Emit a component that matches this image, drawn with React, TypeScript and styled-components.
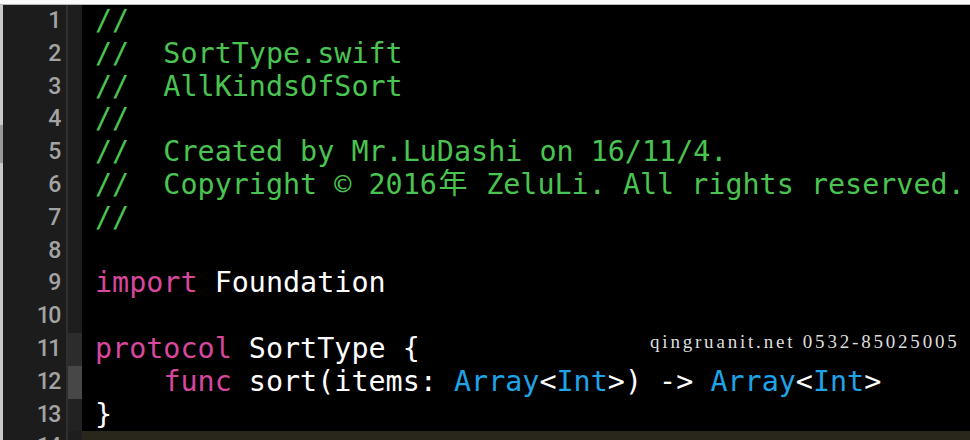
import React from "react";
import styled, { createGlobalStyle } from "styled-components";

const Global = createGlobalStyle`
  html, body { margin: 0; padding: 0; background: #000; overflow: hidden; }
  #root { width: 970px; height: 440px; }
`;

type Kind = "comment" | "keyword" | "type" | "plain" | "wide";
type Token = [string, Kind];

const colors: Record<Kind, string> = {
  comment: "#4ac451",
  keyword: "#d6479d",
  type: "#1fa4e8",
  plain: "#ffffff",
  wide: "#4ac451",
};

const lines: Token[][] = [
  [["//", "comment"]],
  [["//  SortType.swift", "comment"]],
  [["//  AllKindsOfSort", "comment"]],
  [["//", "comment"]],
  [["//  Created by Mr.LuDashi on 16/11/4.", "comment"]],
  [
    ["//  Copyright © 2016", "comment"],
    ["年", "wide"],
    [" ZeluLi. All rights reserved.", "comment"],
  ],
  [["//", "comment"]],
  [],
  [
    ["import", "keyword"],
    [" Foundation", "plain"],
  ],
  [],
  [
    ["protocol", "keyword"],
    [" SortType {", "plain"],
  ],
  [
    ["    ", "plain"],
    ["func", "keyword"],
    [" sort(items: ", "plain"],
    ["Array", "type"],
    ["<", "plain"],
    ["Int", "type"],
    [">) -> ", "plain"],
    ["Array", "type"],
    ["<", "plain"],
    ["Int", "type"],
    [">", "plain"],
  ],
  [["}", "plain"]],
  [],
];

const markerColors: Record<number, string> = {
  11: "#2c2c2c",
  12: "#474747",
  13: "#222222",
};

const Editor = styled.div`
  width: 970px;
  height: 440px;
  display: flex;
  flex-direction: column;
  background: #000;
  position: relative;
  overflow: hidden;
`;

const TopBar = styled.div`
  height: 4px;
  background: #fafafa;
  border-bottom: 1px solid #b9b9b9;
  flex: none;
`;

const Body = styled.div`
  flex: 1;
  display: flex;
  min-height: 0;
`;

const LeftStrip = styled.div`
  width: 3px;
  flex: none;
  background: #c9c9c9;
  display: flex;
  flex-direction: column;
  padding-top: 120px;
`;

const StripThumb = styled.div`
  height: 38px;
  background: #9a9a9a;
`;

const Lines = styled.div`
  flex: 1;
  display: flex;
  flex-direction: column;
  background: #1c1c1c;
`;

const Row = styled.div`
  display: grid;
  grid-template-columns: 63px 2px 14px 1fr;
  height: 32.8px;
  flex: none;
`;

const LineNo = styled.div`
  font-family: Roboto, "Liberation Sans", sans-serif;
  font-size: 23px;
  font-weight: 500;
  letter-spacing: -1.4px;
  color: #a3a3a3;
  text-align: right;
  padding-right: 6px;
  line-height: 32.8px;
`;

const Sep = styled.div`
  background: #2f2f2f;
`;

const Marker = styled.div<{ $bg: string }>`
  background: ${(p) => p.$bg};
`;

const Code = styled.div<{ $current: boolean }>`
  background: ${(p) => (p.$current ? "#29261b" : "#000")};
  padding-left: 13px;
  font-family: "DejaVu Sans Mono", "Noto Sans CJK SC", monospace;
  font-size: 28.4px;
  line-height: 32.8px;
  white-space: pre;
  overflow: hidden;
`;

const Tok = styled.span<{ $kind: Kind }>`
  color: ${(p) => colors[p.$kind]};
`;

const Wide = styled.span`
  display: inline-block;
  width: 2ch;
  line-height: 0;
  text-align: center;
  color: ${colors.comment};
  font-family: "Noto Sans CJK SC", sans-serif;
  font-size: 29px;
`;

const Watermark = styled.div`
  position: absolute;
  left: 650px;
  top: 331px;
  font-family: "Liberation Serif", serif;
  font-size: 19px;
  letter-spacing: 2.8px;
  color: #dedede;
  white-space: pre;
`;

export default function App() {
  return (
    <>
      <Global />
      <Editor>
        <TopBar />
        <Body>
          <LeftStrip>
            <StripThumb />
          </LeftStrip>
          <Lines>
            {lines.map((toks, i) => {
              const n = i + 1;
              return (
                <Row key={n}>
                  <LineNo>{n}</LineNo>
                  <Sep />
                  <Marker $bg={markerColors[n] ?? "#1e1e1e"} />
                  <Code $current={n === 14}>
                    {toks.map(([t, k], j) =>
                      k === "wide" ? (
                        <Wide key={j}>{t}</Wide>
                      ) : (
                        <Tok key={j} $kind={k}>
                          {t}
                        </Tok>
                      )
                    )}
                  </Code>
                </Row>
              );
            })}
          </Lines>
        </Body>
        <Watermark>qingruanit.net 0532-85025005</Watermark>
      </Editor>
    </>
  );
}
